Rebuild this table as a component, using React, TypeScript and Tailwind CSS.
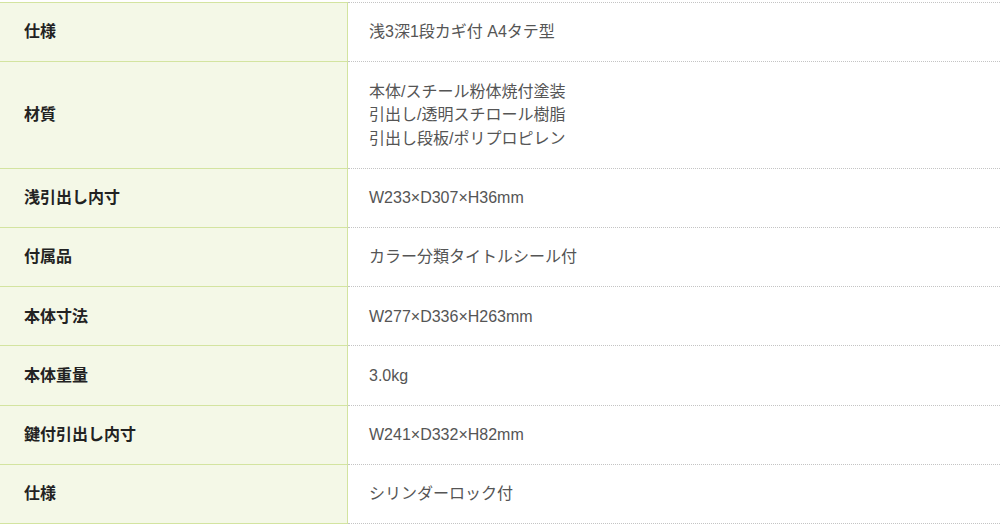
const rows: { label: string; value: string[] }[] = [
  { label: '仕様', value: ['浅3深1段カギ付 A4タテ型'] },
  { label: '材質', value: ['本体/スチール粉体焼付塗装', '引出し/透明スチロール樹脂', '引出し段板/ポリプロピレン'] },
  { label: '浅引出し内寸', value: ['W233×D307×H36mm'] },
  { label: '付属品', value: ['カラー分類タイトルシール付'] },
  { label: '本体寸法', value: ['W277×D336×H263mm'] },
  { label: '本体重量', value: ['3.0kg'] },
  { label: '鍵付引出し内寸', value: ['W241×D332×H82mm'] },
  { label: '仕様', value: ['シリンダーロック付'] },
]

export default function App() {
  return (
    <div className="w-[1000px] h-[526px] bg-white overflow-hidden font-['Liberation_Sans','Noto_Sans_CJK_JP',sans-serif] pt-[2px]">
      <div className="flex">
        <div className="w-[348px] border-t border-r border-[#d3e4a0] bg-[#f4f8e7]" />
        <div className="flex-1 border-t border-dotted border-[#c4c4c4]" />
      </div>
      {rows.map((row, i) => (
        <div key={i} className="flex">
          <div className="w-[348px] shrink-0 flex items-center pl-[24px] bg-[#f4f8e7] border-b border-r border-[#d3e4a0] text-[16px] font-bold text-[#222] leading-[23.5px] py-[17.4px]">
            {row.label}
          </div>
          <div className="flex-1 pl-[21px] py-[17.4px] border-b border-dotted border-[#c4c4c4] text-[16px] text-[#555] leading-[23.5px]">
            {row.value.map((v, j) => (
              <div key={j}>{v}</div>
            ))}
          </div>
        </div>
      ))}
    </div>
  )
}
